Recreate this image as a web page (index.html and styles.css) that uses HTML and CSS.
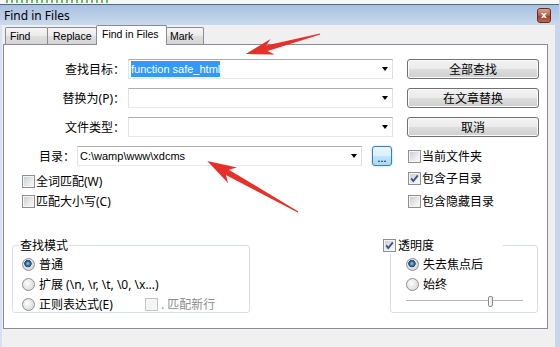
FILE: index.html
```html
<!DOCTYPE html>
<html>
<head>
    <meta charset="UTF-8">
    <title>Find in Files</title>
    <link rel="stylesheet" href="styles.css">
</head>
<body>
    <div class="strip"></div>

    <div class="titlebar">
        <span class="title">Find in Files</span>
        <span class="close">x</span>
    </div>

    <div class="client">
        <div class="tabs">
            <div class="tab tab-find">Find</div>
            <div class="tab tab-replace">Replace</div>
            <div class="tab tab-active">Find in Files</div>
            <div class="tab tab-mark">Mark</div>
        </div>

        <div class="panel">
            <div class="row">
                <span class="label">查找目标：</span>
                <div class="combo"><span class="value"><span class="sel">function safe_html</span></span><i class="arrow"></i></div>
                <button class="btn">全部查找</button>
            </div>
            <div class="row">
                <span class="label">替换为(P)：</span>
                <div class="combo"><span class="value"></span><i class="arrow"></i></div>
                <button class="btn">在文章替换</button>
            </div>
            <div class="row">
                <span class="label">文件类型：</span>
                <div class="combo"><span class="value"></span><i class="arrow"></i></div>
                <button class="btn">取消</button>
            </div>
            <div class="row row-dir">
                <span class="label">目录：</span>
                <div class="combo"><span class="value">C:\wamp\www\xdcms</span><i class="arrow"></i></div>
                <button class="dots">...</button>
                <span class="check"><i class="box"></i>当前文件夹</span>
            </div>

            <div class="opts">
                <div class="opts-left">
                    <span class="check"><i class="box"></i>全词匹配(W)</span>
                    <span class="check"><i class="box"></i>匹配大小写(C)</span>
                </div>
                <div class="opts-right">
                    <span class="check"><i class="box"><svg width="11" height="11" viewBox="0 0 11 11"><path d="M2.2 5.4 L4.3 8 L8.8 2.4" /></svg></i>包含子目录</span>
                    <span class="check"><i class="box"></i>包含隐藏目录</span>
                </div>
            </div>

            <div class="groups">
                <fieldset class="group group-mode">
                    <legend>查找模式</legend>
                    <span class="radio-item"><i class="radio on"></i>普通</span>
                    <span class="radio-item"><i class="radio"></i>扩展 (\n, \r, \t, \0, \x...)</span>
                    <span class="radio-item"><i class="radio"></i>正则表达式(E)<span class="check check-off"><i class="box"></i>. 匹配新行</span></span>
                </fieldset>
                <fieldset class="group group-trans">
                    <legend><i class="box"><svg width="11" height="11" viewBox="0 0 11 11"><path d="M2.2 5.4 L4.3 8 L8.8 2.4" /></svg></i>透明度</legend>
                    <span class="radio-item"><i class="radio on"></i>失去焦点后</span>
                    <span class="radio-item"><i class="radio"></i>始终</span>
                    <div class="slider"><i class="thumb"></i></div>
                </fieldset>
            </div>
        </div>

        <div class="footer"></div>
    </div>

    <!-- red arrows drawn on top of the screenshot -->
    <svg class="arrows" width="559" height="347" viewBox="0 0 559 347">
        <polygon transform="translate(320 34) rotate(164.9)" points="0,-0.6 55,-2.8 49,-8 77,0 49,8 55,2.8 0,0.6" />
        <polygon transform="translate(298 212) rotate(-150.7)" points="0,-0.6 81,-3 75,-9 104,0 75,9 81,3 0,0.6" />
    </svg>
</body>
</html>
```

FILE: styles.css
```css
body {
    margin: 0;
    width: 559px;
    height: 347px;
    overflow: hidden;
    position: relative;
    background: #f0f0f0;
    font-family: "Noto Sans", "Noto Sans CJK SC", sans-serif;
    font-size: 12px;
    color: #000;
}

/* bit of the editor showing above the dialog */
.strip {
    height: 4px;
    background:
        repeating-linear-gradient(90deg, rgba(70, 160, 70, 0.75) 0 2px, transparent 2px 5px) 6px 0 / 104px 3px no-repeat,
        #f6f8f4;
}

.titlebar {
    display: flex;
    align-items: center;
    justify-content: space-between;
    height: 20px;
    padding: 0 8px 0 4px;
    border-top: 1px solid #51698a;
    background: linear-gradient(#a9c1df, #bccfe8 60%, #cbdaed);
}

.title {
    font-size: 12px;
}

.close {
    width: 14px;
    height: 15px;
    box-sizing: border-box;
    border: 1px solid #5e2f24;
    border-radius: 3px;
    background: linear-gradient(#dca18f, #b65d48 50%, #9d402c 51%, #bb6650);
    color: #fff;
    font: bold 9px/13px "DejaVu Sans", sans-serif;
    text-align: center;
}

.client {
    border-left: 2px solid #d6e2f1;
    border-right: 4px solid #c6d7ed;
    padding: 0 7px 0 1px;
    background: #f0f0f0;
}

/* tab strip */
.tabs {
    display: flex;
    align-items: flex-end;
    height: 20px;
    padding-left: 2px;
    margin-bottom: -1px;
    position: relative;
    z-index: 1;
}

.tab {
    box-sizing: border-box;
    height: 17px;
    margin-bottom: 1px;
    margin-right: -1px;
    border: 1px solid #898c95;
    border-bottom: none;
    border-radius: 2px 2px 0 0;
    background: linear-gradient(#f6f6f6, #ebebeb 50%, #dedede 51%, #d6d6d6);
    font-family: "Liberation Sans", sans-serif;
    font-size: 10.5px;
    line-height: 16px;
    white-space: nowrap;
}

.tab-find {
    width: 43px;
    padding-left: 4px;
}

.tab-replace {
    width: 50px;
    padding-left: 5px;
}

.tab-active {
    width: 71px;
    height: 20px;
    margin-bottom: 0;
    padding-left: 5px;
    background: #fff;
    line-height: 17px;
    position: relative;
    z-index: 2;
}

.tab-mark {
    width: 38px;
    padding-left: 3px;
}

.panel {
    box-sizing: border-box;
    height: 285px;
    padding-top: 14px;
    border: 1px solid #898c95;
    background: #fff;
}

.row {
    display: flex;
    align-items: center;
    height: 20px;
    margin-bottom: 9px;
}

.label {
    flex: none;
    width: 121px;
    text-align: right;
    white-space: nowrap;
}

.combo {
    display: flex;
    align-items: center;
    flex: none;
    width: 265px;
    height: 20px;
    box-sizing: border-box;
    margin-left: 3px;
    padding-left: 2px;
    border: 1px solid;
    border-color: #abadb3 #dbdfe6 #e3e9ef #e2e3ea;
    background: #fff;
    font-family: "Liberation Sans", sans-serif;
    font-size: 11px;
    white-space: nowrap;
}

.combo .value {
    flex: 1;
}

.sel {
    background: #3399ff;
    color: #fff;
    padding: 2px 0;
}

.arrow {
    width: 0;
    height: 0;
    margin-right: 4px;
    border-left: 3.5px solid transparent;
    border-right: 3.5px solid transparent;
    border-top: 4px solid #000;
}

.btn {
    flex: none;
    width: 132px;
    height: 20px;
    margin-left: 14px;
    padding: 0;
    border: 1px solid #707070;
    border-radius: 3px;
    background: linear-gradient(#f2f2f2, #ebebeb 50%, #dddddd 51%, #cfcfcf);
    box-shadow: inset 0 0 0 1px #fbfbfb;
    font-family: inherit;
    font-size: 12px;
    line-height: 17px;
    color: #000;
}

.row-dir {
    margin-bottom: 0;
}

.row-dir .label {
    width: 71px;
}

.row-dir .combo {
    width: 285px;
    margin-left: 2px;
}

.dots {
    flex: none;
    width: 20px;
    height: 20px;
    margin-left: 10px;
    padding: 0;
    border: 1px solid #3c7fb1;
    border-radius: 3px;
    background: linear-gradient(#eaf6fd, #d9f0fc 50%, #bee6fd 51%, #a7d9f5);
    box-shadow: 0 0 2px #8fc9ef;
    font: 11px/22px "Noto Sans", sans-serif;
    color: #000;
}

.row-dir .check {
    margin-left: 16px;
}

/* checkboxes and radios */
.check {
    display: flex;
    align-items: center;
    gap: 1px;
    height: 20px;
    white-space: nowrap;
}

.box {
    display: flex;
    align-items: center;
    justify-content: center;
    flex: none;
    width: 13px;
    height: 13px;
    box-sizing: border-box;
    border: 1px solid #8e8f8f;
    background: linear-gradient(135deg, #c6cad0, #eff0f1 70%, #f8f8f8);
    box-shadow: inset 0 0 0 1px #f4f4f4;
}

.box svg path {
    fill: none;
    stroke: #3a518c;
    stroke-width: 1.8;
}

.check-off {
    margin-left: 28px;
    gap: 3px;
    color: #8d8d8d;
}

.check-off .box {
    border-color: #c4c4c4;
    background: #f4f4f4;
}

.opts {
    display: grid;
    grid-template-columns: 404px auto;
}

.opts-left {
    padding: 5px 0 0 18px;
}

.opts-right {
    display: flex;
    flex-direction: column;
    gap: 3px;
    padding-top: 2px;
}

.groups {
    display: flex;
    justify-content: space-between;
    align-items: flex-start;
    margin-top: 26px;
    padding: 0 9px 0 8px;
}

.group {
    box-sizing: border-box;
    min-width: 0;
    height: 76px;
    margin: 0;
    border: 1px solid #d5dfe5;
    border-radius: 3px;
}

.group legend {
    line-height: 17px;
    white-space: nowrap;
}

.group-mode {
    width: 238px;
    padding: 0 0 0 9px;
}

.group-mode legend {
    padding: 0 1px;
    margin-left: -3px;
}

.group-trans {
    width: 148px;
    padding: 0 0 0 15px;
}

.group-trans legend {
    display: flex;
    align-items: center;
    gap: 2px;
    width: 120px;
    margin-left: -23px;
    padding: 0;
    background: #fff;
}

.radio-item {
    display: flex;
    align-items: center;
    gap: 4px;
    height: 20px;
    white-space: nowrap;
}

.radio {
    flex: none;
    width: 13px;
    height: 13px;
    box-sizing: border-box;
    border: 1px solid #8e8f8f;
    border-radius: 50%;
    background: radial-gradient(circle at 40% 40%, #fdfdfd, #e2e2e2 60%, #cfcfcf);
}

.radio.on {
    background: radial-gradient(circle at 45% 42%, #9fd8f8 0, #3a7fb4 1.8px, #1c3f68 3.4px, #e9e9e9 4px, #d8d8d8 5.5px);
}

.slider {
    display: flex;
    align-items: center;
    width: 117px;
    height: 14px;
    background: linear-gradient(transparent 6px, #b4b4b4 6px, #b4b4b4 7px, #fff 7px, #fff 8px, transparent 8px);
}

.thumb {
    width: 5px;
    height: 11px;
    box-sizing: border-box;
    margin-left: 82px;
    border: 1px solid #8a8a8a;
    border-radius: 2px;
    background: linear-gradient(90deg, #fff, #e6e6e6);
}

.footer {
    height: 18px;
}

.arrows {
    position: absolute;
    left: 0;
    top: 0;
    pointer-events: none;
}

.arrows polygon {
    fill: #e8302b;
}
```
